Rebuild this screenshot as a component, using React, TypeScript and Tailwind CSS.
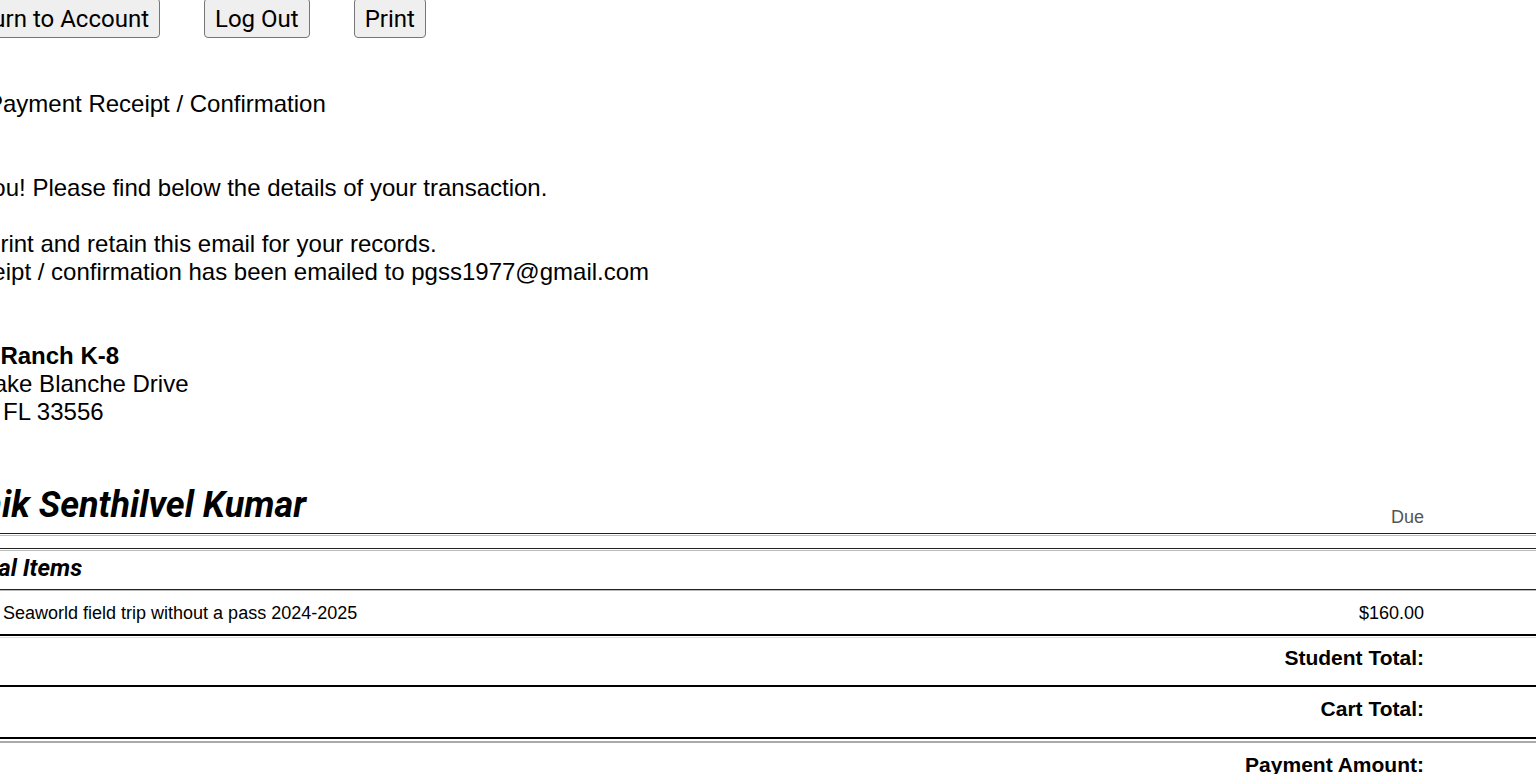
import React from 'react';

const buttons = ['Return to Account', 'Log Out', 'Print'];

export default function App() {
  return (
    <div className="w-[1536px] h-[774px] overflow-hidden bg-white text-black font-['Liberation_Sans',Arial,sans-serif]">
      <div className="-ml-[93px] -mt-[2px] w-[1767px]">
        {/* top actions */}
        <div className="flex gap-[44px] ml-[39px]">
          {buttons.map((label) => (
            <button
              key={label}
              className="h-[40px] px-[10px] pt-[2px] rounded-[4px] border border-[#767676] bg-[#efefef] font-['Roboto',sans-serif] text-[24px] leading-none text-black"
            >
              {label}
            </button>
          ))}
        </div>

        <p className="mt-[52px] ml-[80px] text-[24px] leading-[28px]">Payment Receipt / Confirmation</p>

        <p className="mt-[56px] text-[24px] leading-[28px]">
          Thank you! Please find below the details of your transaction.
          <br />
          <br />
          Please print and retain this email for your records.
          <br />
          This receipt / confirmation has been emailed to pgss1977@gmail.com
        </p>

        <div className="mt-[56px] text-[24px] leading-[28px]">
          <div className="font-bold">Starkey Ranch K-8</div>
          <div>12400 Lake Blanche Drive</div>
          <div>Odessa, FL 33556</div>
        </div>

        {/* student table */}
        <div className="mt-[50px] h-[57px] flex items-end justify-between pr-[250px]">
          <h2 className="mb-[7px] ml-[9px] font-['Roboto',sans-serif] font-bold italic text-[36px] leading-[42px]">
            Karthik Senthilvel Kumar
          </h2>
          <span className="mb-[5px] text-[18px] leading-[21px] text-[#555]">Due</span>
        </div>
        <div className="h-px bg-[#222]" />
        <div className="h-px" />
        <div className="h-px bg-[#bbb]" />
        <div className="h-[12px]" />
        <div className="h-px bg-[#222]" />
        <div className="h-px" />
        <div className="h-px bg-[#bbb]" />

        <div className="h-[38px] flex items-center pl-[3px] pb-[4px]">
          <span className="font-['Roboto',sans-serif] font-bold italic text-[24px] leading-[28px]">Additional Items</span>
        </div>
        <div className="h-px bg-[#222]" />
        <div className="h-px bg-[#bbb]" />

        <div className="h-[43px] flex items-center justify-between pl-[96px] pr-[250px] pt-[1px] text-[18px]">
          <span>Seaworld field trip without a pass 2024-2025</span>
          <span>$160.00</span>
        </div>
        <div className="h-[2px] bg-black" />
        <div className="h-px" />
        <div className="h-px bg-[#ddd]" />

        <div className="h-[47px] flex items-center justify-end pr-[250px] pb-[8px] text-[21px] font-bold">
          Student Total:
        </div>
        <div className="h-[2px] bg-black" />

        <div className="h-[50px] flex items-center justify-end pr-[250px] pb-[7px] text-[21px] font-bold">
          Cart Total:
        </div>
        <div className="h-[2px] bg-black" />
        <div className="h-[2px]" />
        <div className="h-[2px] bg-[#aaa]" />

        <div className="h-[50px] flex items-center justify-end pr-[250px] pb-[6px] text-[21px] font-bold">
          Payment Amount:
        </div>
      </div>
    </div>
  );
}
